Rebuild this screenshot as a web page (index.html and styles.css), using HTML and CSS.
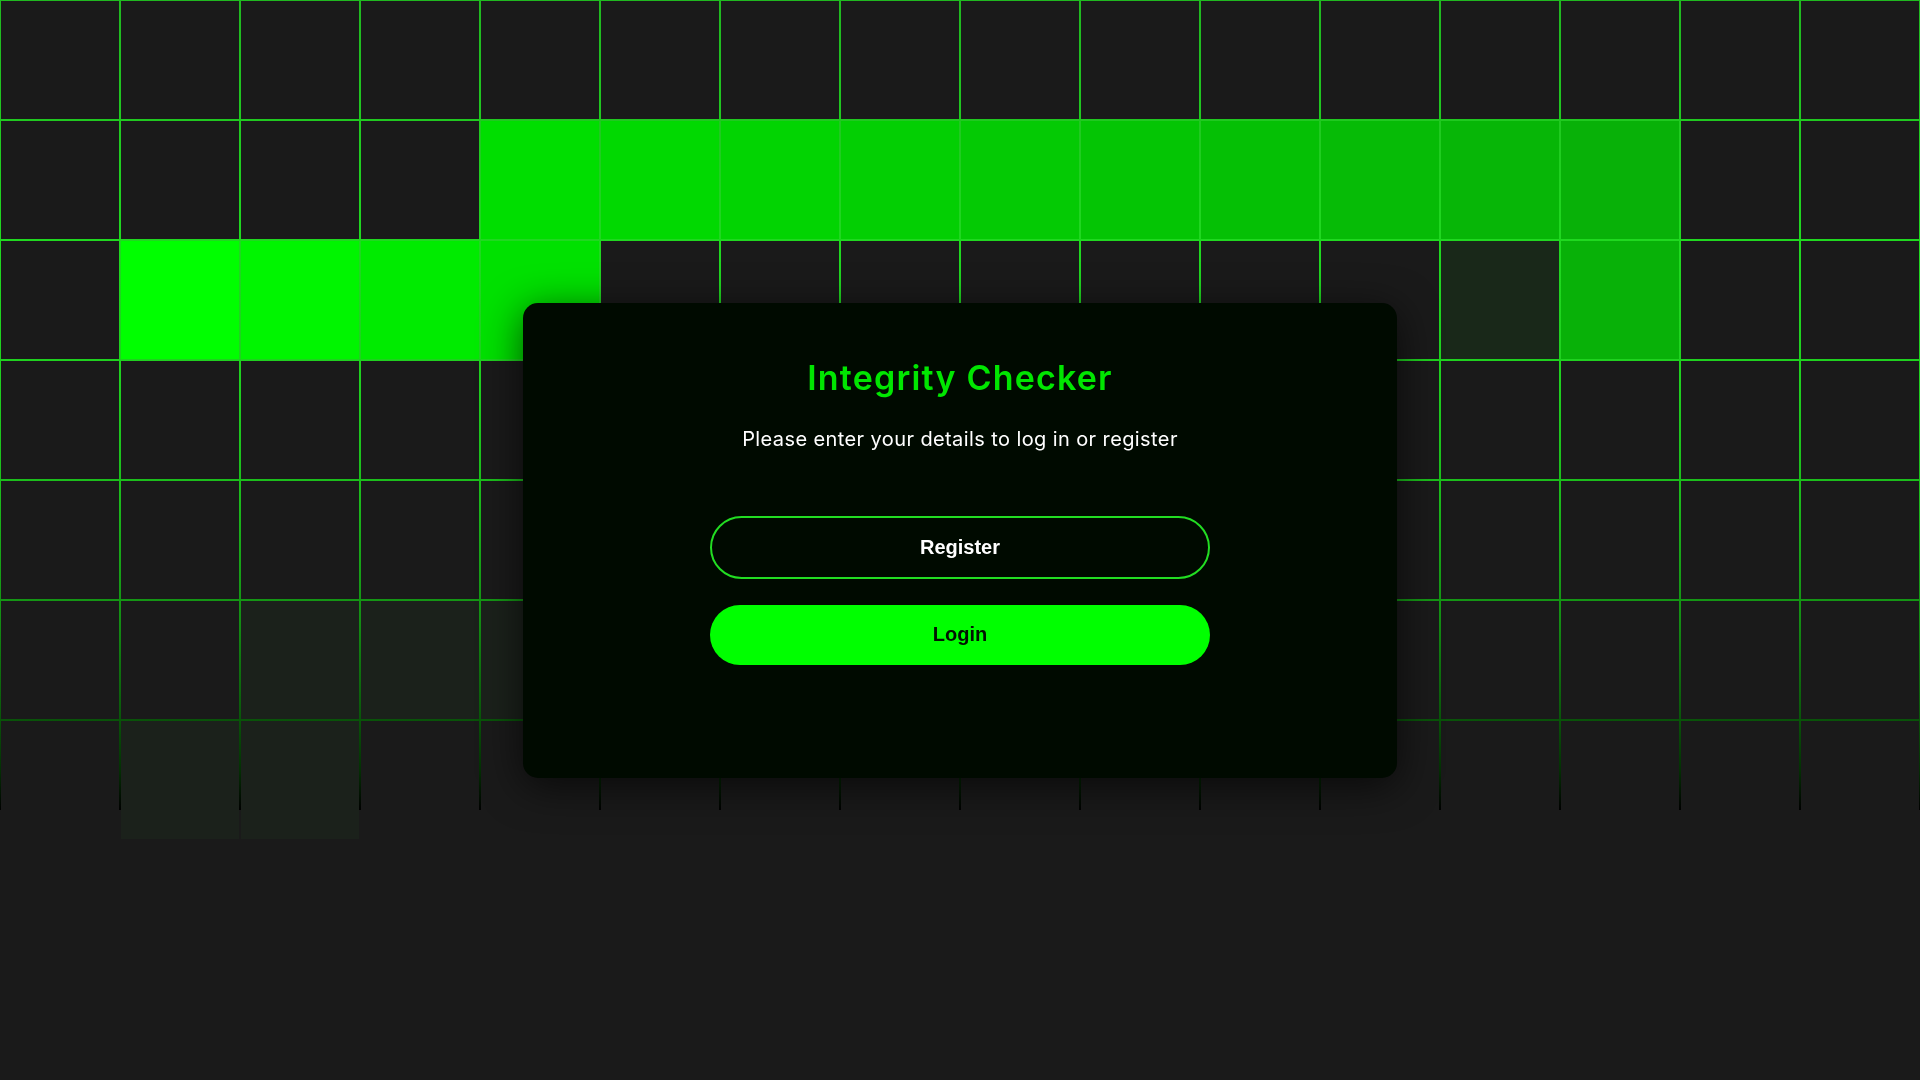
FILE: index.html
```html
<!DOCTYPE html>
<html lang="en">
<head>
<meta charset="utf-8">
<title>Integrity Checker</title>
<link rel="stylesheet" href="styles.css">
</head>
<body>
<div class="grid-bg" aria-hidden="true">
  <div class="cell"></div><div class="cell"></div><div class="cell"></div><div class="cell"></div><div class="cell"></div><div class="cell"></div><div class="cell"></div><div class="cell"></div><div class="cell"></div><div class="cell"></div><div class="cell"></div><div class="cell"></div><div class="cell"></div><div class="cell"></div><div class="cell"></div><div class="cell"></div>
  <div class="cell"></div><div class="cell"></div><div class="cell"></div><div class="cell"></div><div class="cell g4"></div><div class="cell g5"></div><div class="cell g6"></div><div class="cell g7"></div><div class="cell g8"></div><div class="cell g9"></div><div class="cell g10"></div><div class="cell g11"></div><div class="cell g12"></div><div class="cell g13"></div><div class="cell"></div><div class="cell"></div>
  <div class="cell"></div><div class="cell b1"></div><div class="cell b2"></div><div class="cell b3"></div><div class="cell b4"></div><div class="cell"></div><div class="cell"></div><div class="cell"></div><div class="cell"></div><div class="cell"></div><div class="cell"></div><div class="cell"></div><div class="cell fade"></div><div class="cell g13"></div><div class="cell"></div><div class="cell"></div>
  <div class="cell"></div><div class="cell"></div><div class="cell"></div><div class="cell"></div><div class="cell"></div><div class="cell"></div><div class="cell"></div><div class="cell"></div><div class="cell"></div><div class="cell"></div><div class="cell"></div><div class="cell"></div><div class="cell"></div><div class="cell"></div><div class="cell"></div><div class="cell"></div>
  <div class="cell"></div><div class="cell"></div><div class="cell"></div><div class="cell"></div><div class="cell"></div><div class="cell"></div><div class="cell"></div><div class="cell"></div><div class="cell"></div><div class="cell"></div><div class="cell"></div><div class="cell"></div><div class="cell"></div><div class="cell"></div><div class="cell"></div><div class="cell"></div>
  <div class="cell"></div><div class="cell"></div><div class="cell dim"></div><div class="cell dim"></div><div class="cell dim"></div><div class="cell"></div><div class="cell"></div><div class="cell"></div><div class="cell"></div><div class="cell"></div><div class="cell"></div><div class="cell"></div><div class="cell"></div><div class="cell"></div><div class="cell"></div><div class="cell"></div>
  <div class="cell"></div><div class="cell dim"></div><div class="cell dim"></div><div class="cell"></div><div class="cell"></div><div class="cell"></div><div class="cell"></div><div class="cell"></div><div class="cell"></div><div class="cell"></div><div class="cell"></div><div class="cell"></div><div class="cell"></div><div class="cell"></div><div class="cell"></div><div class="cell"></div>
</div>

<main class="page">
  <section class="card">
    <h1 class="title">Integrity Checker</h1>
    <p class="subtitle">Please enter your details to log in or register</p>
    <div class="actions">
      <button class="btn btn-outline" type="button">Register</button>
      <button class="btn btn-solid" type="button">Login</button>
    </div>
  </section>
</main>
</body>
</html>
```

FILE: styles.css
```css
* {
  box-sizing: border-box;
}

html, body {
  margin: 0;
  padding: 0;
}

body {
  background: #1a1a1a;
  font-family: "Inter", "Liberation Sans", sans-serif;
  min-height: 100vh;
  overflow: hidden;
}

/* decorative background grid */
.grid-bg {
  position: fixed;
  top: 0;
  left: 0;
  width: 100%;
  height: 810px;
  z-index: 0;
  display: grid;
  grid-template-columns: repeat(16, 118px);
  grid-auto-rows: 118px;
  gap: 2px;
  padding: 1px 0 0 1px;
  align-content: start;
  background: linear-gradient(to bottom,
    #20b820 0px,
    #20d820 240px,
    #1fd01f 380px,
    #1bba1b 500px,
    #138e13 620px,
    #0a5a0a 710px,
    #043004 770px,
    #000000 810px);
}

.cell {
  background: #1a1a1a;
}

.g4  { background: #00de00; }
.g5  { background: #01d901; }
.g6  { background: #02d402; }
.g7  { background: #03cf03; }
.g8  { background: #04ca04; }
.g9  { background: #04c504; }
.g10 { background: #05c005; }
.g11 { background: #06bb06; }
.g12 { background: #07b607; }
.g13 { background: #08b108; }

.b1 { background: #00ff00; }
.b2 { background: #00f500; }
.b3 { background: #00eb00; }
.b4 { background: #00e100; }

.fade { background: #192819; }
.dim  { background: #1b211b; }

/* content */
.page {
  position: relative;
  z-index: 1;
  min-height: 100vh;
  display: flex;
  align-items: center;
  justify-content: center;
}

.card {
  width: 874px;
  height: 475px;
  background: #000a00;
  border-radius: 15px;
  box-shadow: 0 8px 40px rgba(0, 0, 0, 0.65);
  display: flex;
  flex-direction: column;
  align-items: center;
  padding-top: 55px;
}

.title {
  margin: 0;
  font-family: "Inter", "Liberation Sans", sans-serif;
  font-weight: 600;
  font-size: 34px;
  letter-spacing: 1.2px;
  line-height: 40px;
  color: #00e600;
}

.subtitle {
  margin: 29px 0 0;
  font-family: "Inter", "Liberation Sans", sans-serif;
  font-weight: 400;
  font-size: 20px;
  letter-spacing: 0.4px;
  line-height: 24px;
  color: #ffffff;
}

.actions {
  margin-top: 65px;
  display: flex;
  flex-direction: column;
  gap: 26px;
  width: 500px;
}

.btn {
  width: 100%;
  border-radius: 32px;
  font-family: "Liberation Sans", Arial, sans-serif;
  font-weight: 700;
  font-size: 20px;
  cursor: pointer;
  padding: 0;
}

.btn-outline {
  height: 63px;
  background: transparent;
  border: 2px solid #22dd22;
  color: #ffffff;
}

.btn-solid {
  height: 60px;
  background: #00ff00;
  border: none;
  color: #021202;
}
```
